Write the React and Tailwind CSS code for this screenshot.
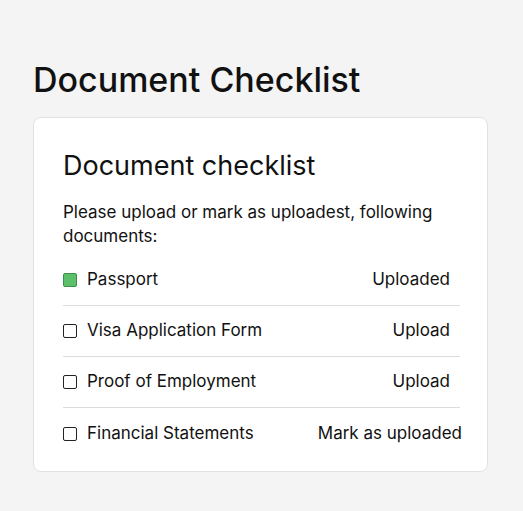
import React from 'react'

const docs = [
  { name: 'Passport', action: 'Uploaded', done: true },
  { name: 'Visa Application Form', action: 'Upload' },
  { name: 'Proof of Employment', action: 'Upload' },
  { name: 'Financial Statements', action: 'Mark as uploaded', wide: true },
]

export default function App() {
  return (
    <div
      className="min-h-[511px] bg-[#f4f4f4] px-[33px] pt-[60px] text-[#111]"
      style={{ fontFamily: 'Inter, "Liberation Sans", Arial, sans-serif' }}
    >
      <h1 className="text-[34px] leading-[40px] font-medium">Document Checklist</h1>

      <div className="mt-[17px] w-[455px] rounded-lg border border-[#e2e2e2] bg-white px-[29px] pt-[32px] pb-[12px]">
        <h2 className="text-[27px] leading-[32px]">Document checklist</h2>
        <p className="mt-[18px] text-[17px] leading-[24px]">
          Please upload or mark as uploadest, following documents:
        </p>

        <ul className="mt-[7px] w-[397px]">
          {docs.map((d, i) => (
            <li
              key={d.name}
              className={
                'flex h-[51px] items-center justify-between text-[17px] ' +
                (i < docs.length - 1 ? 'border-b border-[#dcdcdc]' : '')
              }
            >
              <div className="flex items-center gap-[10px]">
                {d.done ? (
                  <span className="h-[14px] w-[14px] rounded-[2px] border border-[#3f8f4a] bg-[#5cbf6a]" />
                ) : (
                  <span className="h-[14px] w-[14px] rounded-[2px] border-[1.5px] border-[#222] bg-white" />
                )}
                <span>{d.name}</span>
              </div>
              <span className={d.wide ? '-mr-[2px]' : 'mr-[10px]'}>{d.action}</span>
            </li>
          ))}
        </ul>
      </div>
    </div>
  )
}
